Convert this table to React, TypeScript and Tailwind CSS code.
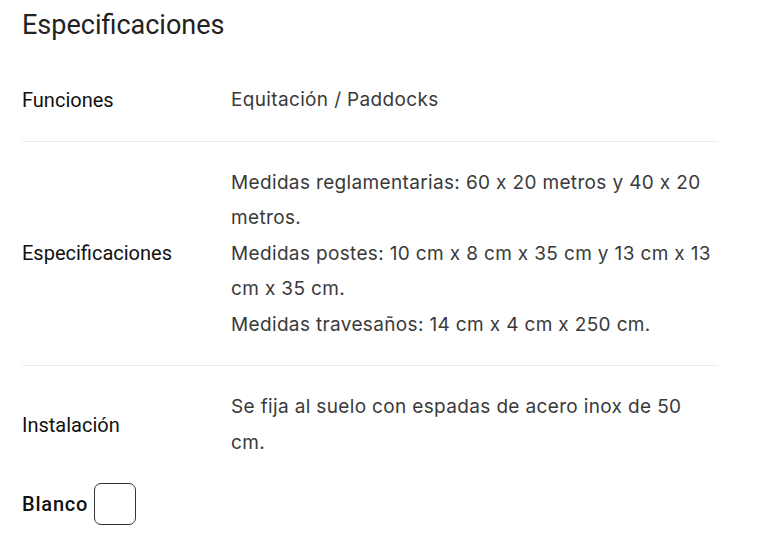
export default function App() {
  const rows = [
    { label: 'Funciones', value: ['Equitación / Paddocks'] },
    {
      label: 'Especificaciones',
      value: [
        'Medidas reglamentarias: 60 x 20 metros y 40 x 20 metros.',
        'Medidas postes: 10 cm x 8 cm x 35 cm y 13 cm x 13 cm x 35 cm.',
        'Medidas travesaños: 14 cm x 4 cm x 250 cm.',
      ],
    },
    { label: 'Instalación', value: ['Se fija al suelo con espadas de acero inox de 50 cm.'] },
  ];

  return (
    <div className="min-h-screen bg-white px-[22px] pt-[5px] font-['Roboto',sans-serif]">
      <h2 className="text-[27px] leading-[40px] text-[#222]">Especificaciones</h2>

      <div className="mt-[14px] w-[696px]">
        {rows.map((row, i) => (
          <div
            key={row.label}
            className={`grid grid-cols-[209px_1fr] items-center py-[23px] ${i < rows.length - 1 ? 'border-b border-[#ebebeb]' : ''}`}
          >
            <div className="text-[20px] text-[#111]">{row.label}</div>
            <div className="font-['Inter',sans-serif] text-[19px] leading-[35.5px] tracking-[0.35px] text-[#3a3a3a]">
              {row.value.map((v) => (
                <p key={v}>{v}</p>
              ))}
            </div>
          </div>
        ))}
      </div>

      <div className="flex items-center gap-[6px]">
        <span className="text-[20px] font-medium tracking-[0.8px] text-[#111]">Blanco</span>
        <span className="h-[42px] w-[42px] rounded-[7px] border border-[#333] bg-white" />
      </div>
    </div>
  );
}
